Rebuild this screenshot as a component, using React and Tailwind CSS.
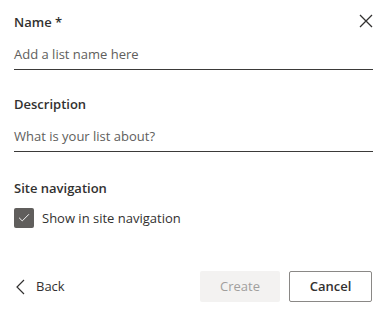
import { Check } from "lucide-react";

function Field({ label, placeholder, className = "" }) {
  return (
    <div className={`flex flex-col ${className}`}>
      <label className="text-[13px] font-semibold text-[#323130] leading-[20px]">{label}</label>
      <div className="mt-[12px] pb-[5px] border-b border-[#3b3a39] text-[13px] leading-[20px] text-[#605e5c]">
        {placeholder}
      </div>
    </div>
  );
}

export default function App() {
  return (
    <div className="w-[390px] h-[320px] bg-white flex flex-col px-[14px] pt-[12px] pb-[18px] font-['Open_Sans',sans-serif] text-[#323130]">
      <div className="flex flex-col pr-[3px] relative">
        <button className="absolute right-[3px] top-[2px] text-[#323130]">
          <svg width="14" height="14" viewBox="0 0 14 14" fill="none" stroke="currentColor" strokeWidth="1.3">
            <path d="M1 1L13 13M13 1L1 13" />
          </svg>
        </button>
        <Field label="Name *" placeholder="Add a list name here" />
        <Field label="Description" placeholder="What is your list about?" className="mt-[24px]" />
        <div className="flex flex-col mt-[26px]">
          <span className="text-[13px] font-semibold leading-[20px]">Site navigation</span>
          <label className="mt-[10px] flex items-center gap-[8px] text-[13px] leading-[20px]">
            <span className="w-[20px] h-[20px] rounded-[2px] bg-[#605e5c] flex items-center justify-center text-white">
              <Check size={14} strokeWidth={1.6} />
            </span>
            Show in site navigation
          </label>
        </div>
      </div>
      <div className="mt-auto flex items-center justify-between pr-[4px]">
        <button className="flex items-center gap-[11px] text-[13px] text-[#323130] pl-[2px]">
          <svg width="9" height="16" viewBox="0 0 9 16" fill="none" stroke="currentColor" strokeWidth="1.2">
            <path d="M8 1L1 8L8 15" />
          </svg>
          Back
        </button>
        <div className="flex gap-[9px]">
          <button className="w-[80px] h-[31px] rounded-[2px] bg-[#f3f2f1] text-[#a19f9d] text-[13px]">
            Create
          </button>
          <button className="w-[83px] h-[31px] rounded-[2px] border border-[#8a8886] text-[13px] font-semibold text-[#323130]">
            Cancel
          </button>
        </div>
      </div>
    </div>
  );
}
